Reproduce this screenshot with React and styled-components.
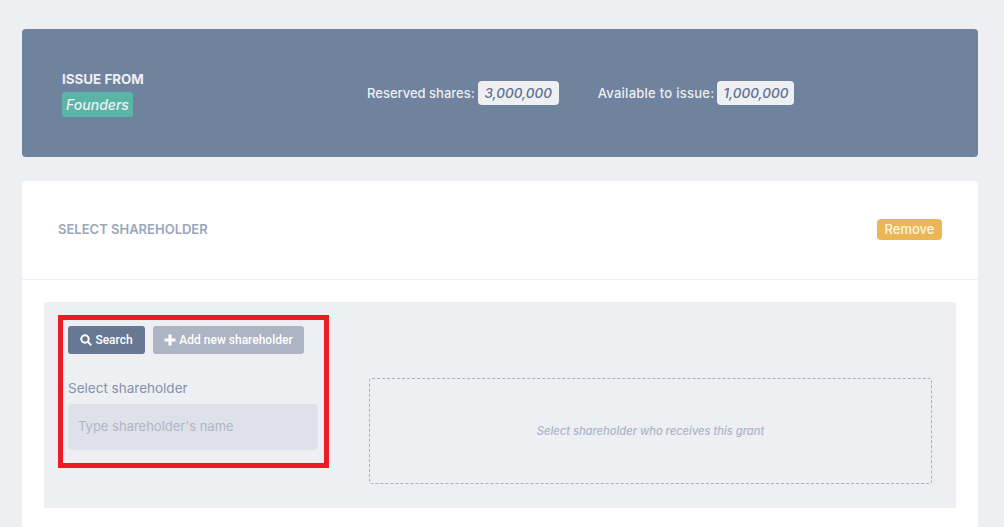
import styled, { createGlobalStyle } from "styled-components";

const GlobalStyle = createGlobalStyle`
  html, body {
    margin: 0;
    padding: 0;
    background: #edeff3;
    font-family: "Inter", "Liberation Sans", sans-serif;
    overflow: hidden;
  }
  * {
    box-sizing: border-box;
  }
`;

const Page = styled.div`
  height: 527px;
  padding: 29px 26px 0 22px;
  overflow: hidden;
`;

const Banner = styled.div`
  display: flex;
  align-items: center;
  height: 128px;
  padding: 0 40px;
  background: #6f829e;
  border-radius: 4px;
  color: #edeff3;
`;

const IssueFrom = styled.div`
  display: flex;
  flex-direction: column;
  align-items: flex-start;
  width: 305px;
  flex-shrink: 0;
  padding-top: 2px;
`;

const IssueTitle = styled.div`
  font-size: 13.4px;
  font-weight: 700;
  line-height: 15px;
  margin-bottom: 5px;
`;

const Tag = styled.span`
  height: 25px;
  width: 71px;
  line-height: 25px;
  text-align: center;
  background: #5ab5a6;
  border-radius: 3px;
  font-size: 14px;
  font-weight: 500;
  font-style: italic;
`;

const Stat = styled.div`
  display: flex;
  align-items: center;
  margin-right: 39px;
  font-size: 13px;
  font-weight: 500;
  letter-spacing: ${({ $tracking }) => $tracking || 0}px;
  white-space: nowrap;
`;

const StatValue = styled.span`
  height: 24px;
  width: ${({ $width }) => $width}px;
  line-height: 24px;
  margin-left: 3px;
  text-align: center;
  background: #edeff3;
  border-radius: 4px;
  color: #5f7190;
  font-size: 13.5px;
  font-weight: 500;
  font-style: italic;
  letter-spacing: 0;
`;

const Card = styled.div`
  margin-top: 24px;
  background: #fff;
  border-radius: 4px 4px 0 0;
  height: 346px;
`;

const CardHeader = styled.div`
  display: flex;
  align-items: center;
  justify-content: space-between;
  height: 99px;
  padding: 0 36px 2px;
  border-bottom: 1px solid #edeff3;
`;

const CardTitle = styled.div`
  color: #9ba6bb;
  font-size: 13px;
  font-weight: 600;
`;

const RemoveButton = styled.button`
  height: 21px;
  width: 65px;
  padding: 0;
  border: 0;
  border-radius: 4px;
  background: #ecb655;
  color: #fdf5e6;
  font-family: inherit;
  font-size: 13px;
  font-weight: 500;
`;

const Panel = styled.div`
  display: flex;
  align-items: flex-start;
  height: 206px;
  margin: 22px 22px 0;
  padding: 13px 24px 0 14px;
  background: #edeff3;
  border-radius: 3px 3px 0 0;
`;

const Highlight = styled.div`
  width: 271px;
  height: 153px;
  flex-shrink: 0;
  padding: 6px 6px 0 5px;
  border: 5px solid #ed1c24;
`;

const ButtonRow = styled.div`
  display: flex;
  gap: 8px;
`;

const ActionButton = styled.button`
  display: flex;
  align-items: center;
  justify-content: center;
  gap: 3px;
  height: 28px;
  width: ${({ $width }) => $width}px;
  padding: 0;
  border: 0;
  border-radius: 3px;
  background: ${({ $muted }) => ($muted ? "#adb4c3" : "#687792")};
  color: #fff;
  font-family: "Roboto", "Liberation Sans", sans-serif;
  font-size: 12px;
  font-weight: 500;
`;

const ButtonIcon = styled.svg`
  width: 12px;
  height: 12px;
  flex-shrink: 0;
  fill: none;
  stroke: #fff;
  stroke-width: ${({ $weight }) => $weight};
`;

const FieldLabel = styled.label`
  display: block;
  margin-top: 26px;
  color: #8492ab;
  font-size: 13.5px;
  line-height: 16px;
`;

const NameInput = styled.input`
  display: block;
  width: 250px;
  height: 46px;
  margin-top: 8px;
  padding: 0 10px 2px;
  border: 0;
  border-radius: 4px;
  background: #dee1ea;
  font-family: inherit;
  font-size: 13px;
  &::placeholder {
    color: #aeb6c7;
    opacity: 1;
  }
`;

const EmptyGrant = styled.div`
  display: flex;
  align-items: center;
  justify-content: center;
  flex: 1;
  height: 106px;
  margin: 63px 0 0 40px;
  padding-bottom: 1px;
  border: 1px dashed #a5afc5;
  border-radius: 3px;
  color: #a9b4c9;
  font-size: 11.15px;
  font-weight: 500;
  font-style: italic;
`;

const SearchIcon = () => (
  <ButtonIcon viewBox="0 0 12 12" $weight={2}>
    <circle cx="5" cy="5" r="3.7" />
    <path d="M7.8 7.8 L11.2 11.2" />
  </ButtonIcon>
);

const PlusIcon = () => (
  <ButtonIcon viewBox="0 0 12 12" $weight={3}>
    <path d="M6 0.5 V11.5 M0.5 6 H11.5" />
  </ButtonIcon>
);

export default function App() {
  return (
    <Page>
      <GlobalStyle />
      <Banner>
        <IssueFrom>
          <IssueTitle>ISSUE FROM</IssueTitle>
          <Tag>Founders</Tag>
        </IssueFrom>
        <Stat>
          Reserved shares:
          <StatValue $width={81}>3,000,000</StatValue>
        </Stat>
        <Stat $tracking={0.26}>
          Available to issue:
          <StatValue $width={77}>1,000,000</StatValue>
        </Stat>
      </Banner>
      <Card>
        <CardHeader>
          <CardTitle>SELECT SHAREHOLDER</CardTitle>
          <RemoveButton>Remove</RemoveButton>
        </CardHeader>
        <Panel>
          <Highlight>
            <ButtonRow>
              <ActionButton $width={77}>
                <SearchIcon />
                Search
              </ActionButton>
              <ActionButton $width={151} $muted>
                <PlusIcon />
                Add new shareholder
              </ActionButton>
            </ButtonRow>
            <FieldLabel>Select shareholder</FieldLabel>
            <NameInput placeholder="Type shareholder's name" />
          </Highlight>
          <EmptyGrant>Select shareholder who receives this grant</EmptyGrant>
        </Panel>
      </Card>
    </Page>
  );
}
